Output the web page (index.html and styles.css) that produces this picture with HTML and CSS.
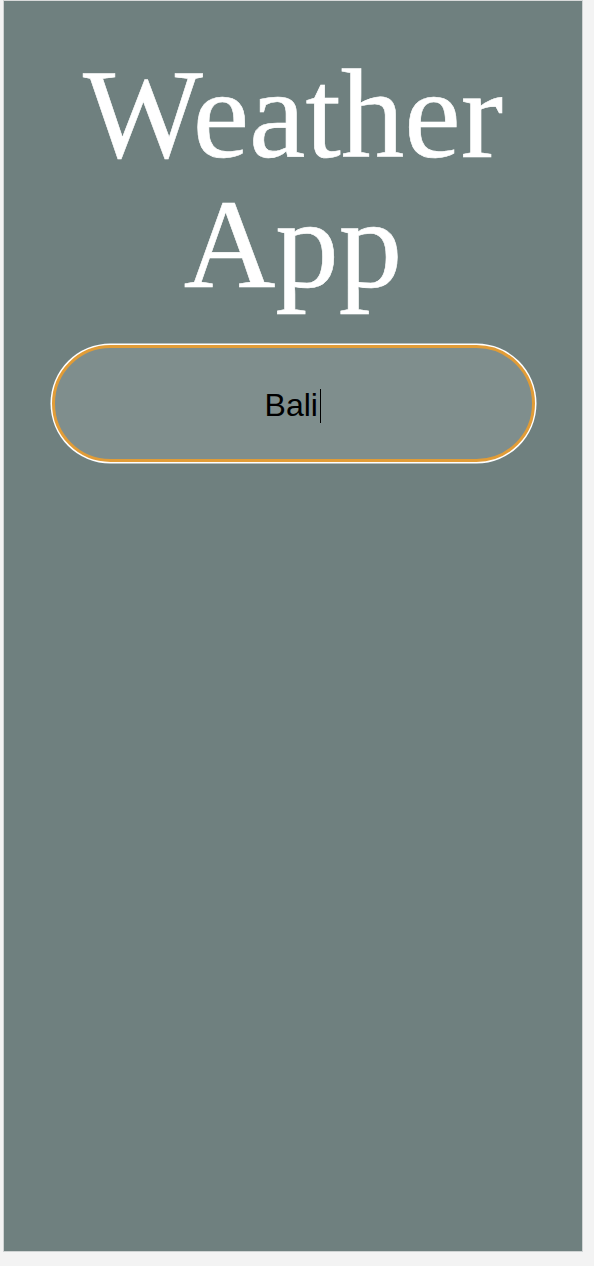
FILE: index.html
```html
<!DOCTYPE html>
<html lang="en">
<head>
<meta charset="utf-8">
<title>Weather App</title>
<link rel="stylesheet" href="styles.css">
</head>
<body>
  <main class="app">
    <h1 class="title">Weather App</h1>
    <div class="search" role="textbox" aria-label="City">
      <span class="search-text">Bali</span><span class="caret"></span>
    </div>
  </main>
</body>
</html>
```

FILE: styles.css
```css
html, body {
  margin: 0;
  padding: 0;
}

body {
  background: #f3f3f3;
  width: 594px;
  height: 1266px;
  overflow: hidden;
}

.app {
  box-sizing: border-box;
  width: 580px;
  height: 1252px;
  margin: 0 0 0 3px;
  padding-top: 48px;
  background: #6f807f;
  border: 1px solid #cfd3d3;
  border-top-color: #d8dada;
  display: flex;
  flex-direction: column;
  align-items: center;
}

.title {
  margin: 0;
  font-family: "Liberation Serif", "Times New Roman", serif;
  font-weight: normal;
  font-size: 127px;
  line-height: 130px;
  color: #ffffff;
  text-align: center;
  -webkit-text-stroke: 0.6px #ffffff;
}

.search {
  box-sizing: border-box;
  margin-top: 36px;
  width: 483px;
  height: 117px;
  border: 3px solid #e19c37;
  border-radius: 60px;
  box-shadow: 0 0 0 1.5px #ffffff;
  background: #7f8e8d;
  display: flex;
  align-items: center;
  justify-content: center;
  font-family: "Liberation Sans", Arial, sans-serif;
  font-size: 32px;
  color: #000000;
}

.search-text {
  line-height: 36px;
  padding-top: 2px;
}

.caret {
  display: inline-block;
  width: 1.5px;
  height: 34px;
  margin-left: 2px;
  margin-top: 4px;
  background: #000000;
}
```
